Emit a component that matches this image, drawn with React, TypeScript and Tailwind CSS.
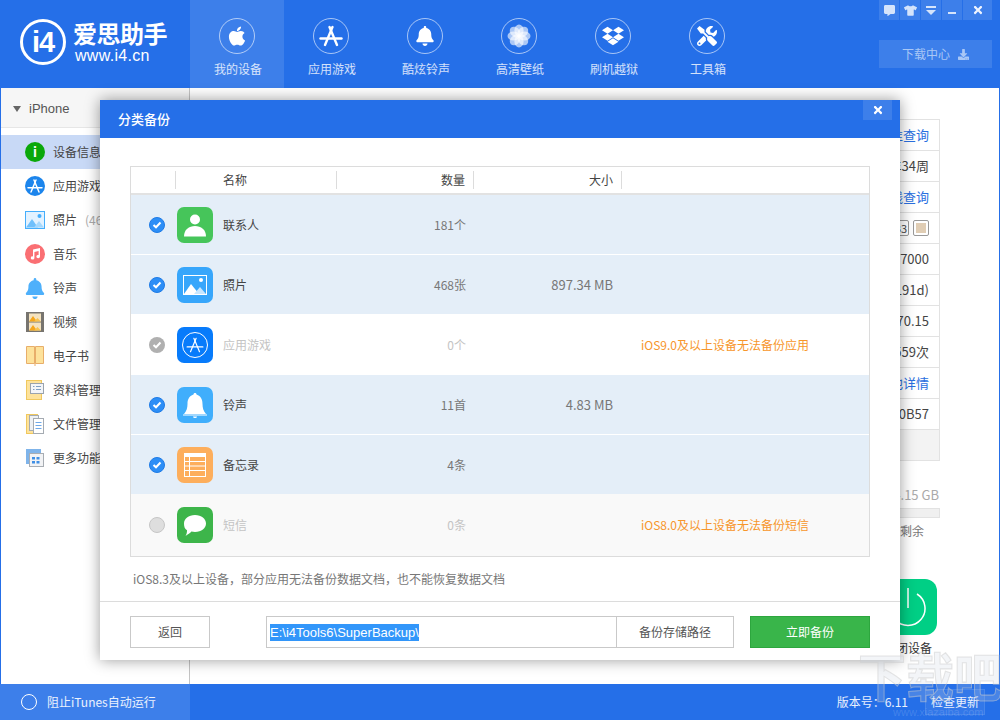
import type { ReactNode } from "react"
import { FaApple, FaBell, FaCommentAlt, FaDropbox, FaTshirt, FaTools, FaTimes, FaDownload } from "react-icons/fa"

function AppA({ size = 22, color = "#fff", sw = 2 }: { size?: number; color?: string; sw?: number }) {
  return (
    <svg width={size} height={size} viewBox="0 0 24 24" fill="none" stroke={color} strokeWidth={sw} strokeLinecap="round">
      <path d="M13.500 3 6 21" />
      <path d="M10.500 3 18 21" />
      <path d="M1.500 14.500h21" />
    </svg>
  )
}

function Flower() {
  const petals = [0, 45, 90, 135, 180, 225, 270, 315]
  return (
    <svg width="24" height="24" viewBox="0 0 24 24">
      {petals.map((a) => (
        <ellipse key={a} cx="12" cy="6.500" rx="4.600" ry="6" fill="#fff" fillOpacity="0.62" transform={`rotate(${a} 12 12)`} />
      ))}
      <circle cx="12" cy="12" r="1.600" fill="#fff" />
    </svg>
  )
}

const navItems: { label: string; icon: ReactNode; active?: boolean }[] = [
  { label: "我的设备", icon: <FaApple size={22} color="#fff" />, active: true },
  { label: "应用游戏", icon: <AppA size={24} sw={2.4} /> },
  { label: "酷炫铃声", icon: <FaBell size={20} color="#fff" /> },
  { label: "高清壁纸", icon: <Flower /> },
  { label: "刷机越狱", icon: <FaDropbox size={22} color="#fff" /> },
  { label: "工具箱", icon: <FaTools size={20} color="#fff" /> },
]

function PhotoIcon() {
  return (
    <svg width="20" height="18" viewBox="0 0 20 18">
      <rect x="0.500" y="0.500" width="19" height="17" fill="#e3f2ff" stroke="#45aefc" />
      <circle cx="14.500" cy="5" r="2" fill="#45aefc" />
      <path d="M1 16.500 7 8l6 8.500z" fill="#6fc0fc" />
      <path d="M9 16.500 14 10l5 6.500z" fill="#a5d8fd" />
    </svg>
  )
}

function sideIcon(name: string) {
  switch (name) {
    case "info":
      return (
        <span className="w-5 h-5 rounded-full bg-[#0aa80a] text-white flex items-center justify-center text-[13px] font-bold">i</span>
      )
    case "app":
      return (
        <span className="w-5 h-5 rounded-full bg-[#1c85ec] flex items-center justify-center">
          <AppA size={16} sw={2.200} />
        </span>
      )
    case "photo":
      return <PhotoIcon />
    case "music":
      return (
        <span className="w-5 h-5 rounded-full bg-[#fa6f73] flex items-center justify-center">
          <svg width="12" height="12" viewBox="0 0 12 12" fill="#fff">
            <path d="M4 1.500 11 0v8.500a1.800 1.600 0 1 1-1.400-1.500V3L5.400 3.900v6a1.800 1.600 0 1 1-1.400-1.500z" />
          </svg>
        </span>
      )
    case "bell":
      return <FaBell size={21} color="#4eb0fb" />
    case "video":
      return (
        <svg width="18" height="20" viewBox="0 0 18 20">
          <rect width="18" height="20" fill="#77746f" />
          <rect x="3" y="1.500" width="12" height="8" fill="#f4e3c0" />
          <rect x="3" y="10.500" width="12" height="8" fill="#f4e3c0" />
          <path d="M3 9.500 7 4l4 5.500zM3 18.500 7 13l4 5.500z" fill="#f5a71d" />
          <path d="M8 9.500 11.500 6 15 9.500zM8 18.500l3.500-3.500 3.500 3.500z" fill="#f8c34f" />
        </svg>
      )
    case "book":
      return (
        <svg width="18" height="20" viewBox="0 0 18 20">
          <path d="M.5.500h8v17h-8zM9.500.500h8v17h-8z" fill="#fde29b" stroke="#e8ae6a" />
          <path d="M8.500 16h1v4h-1z" fill="#e8ae6a" />
        </svg>
      )
    case "data":
      return (
        <svg width="18" height="20" viewBox="0 0 18 20">
          <rect x=".5" y=".5" width="15" height="19" fill="#fde29b" stroke="#f0c85e" />
          <rect x="4.500" y="3.500" width="13" height="10" fill="#f3f5f8" stroke="#9aa3ad" />
          <path d="M7 6.500h1.500M7 9.500h1.500M10 6.500h5M10 9.500h5" stroke="#7f9fc4" />
        </svg>
      )
    case "file":
      return (
        <svg width="18" height="20" viewBox="0 0 18 20">
          <rect x=".5" y=".5" width="11" height="19" fill="#fde29b" stroke="#f0c85e" />
          <rect x="3.500" y="1.500" width="9" height="15" fill="#eef1f4" stroke="#a5abb2" />
          <rect x="7.500" y="4.500" width="10" height="15" fill="#fff" stroke="#a5abb2" />
          <path d="M9.500 8.500h6M9.500 11.500h6M9.500 14.500h6" stroke="#6ea8e8" />
        </svg>
      )
    default:
      return (
        <svg width="18" height="18" viewBox="0 0 18 18">
          <rect width="15" height="15" fill="#7fb4ea" />
          <rect x="3.500" y="4.500" width="14" height="13" fill="#f2f3f5" stroke="#a8adb3" />
          <path d="M6 8h3v2.500H6zM10.500 8h3v2.500h-3zM6 12h3v2.500H6zM10.500 12h3v2.500h-3z" fill="#3f8fe5" />
        </svg>
      )
  }
}

const sideItems = [
  { label: "设备信息", icon: "info" },
  { label: "应用游戏", icon: "app" },
  { label: "照片", icon: "photo", extra: "(468)" },
  { label: "音乐", icon: "music" },
  { label: "铃声", icon: "bell" },
  { label: "视频", icon: "video" },
  { label: "电子书", icon: "book" },
  { label: "资料管理", icon: "data" },
  { label: "文件管理", icon: "file" },
  { label: "更多功能", icon: "more" },
]

const infoRows: { text: string; link?: boolean; swatch?: boolean }[] = [
  { text: "精准查询", link: true },
  { text: "2016年34周" },
  { text: "在线查询", link: true },
  { text: "", swatch: true },
  { text: "A1586/7000" },
  { text: "2016-08(191d)" },
  { text: "10.3.70.15" },
  { text: "已充电559次" },
  { text: "查看电池详情", link: true },
  { text: "F2LS20B57" },
]

function Contact() {
  return (
    <svg width="36" height="36" viewBox="0 0 36 36">
      <rect width="36" height="36" rx="7" fill="#46c55a" />
      <circle cx="18" cy="12.500" r="5" fill="#fff" />
      <path d="M7 29.500c0-7 5-10.500 11-10.500s11 3.500 11 10.500z" fill="#fff" />
    </svg>
  )
}

function Photos() {
  return (
    <svg width="36" height="36" viewBox="0 0 36 36">
      <rect width="36" height="36" rx="7" fill="#37a6fb" />
      <rect x="6.500" y="8.500" width="23" height="19" fill="none" stroke="#fff" />
      <circle cx="24" cy="13" r="2" fill="#fff" />
      <path d="M7 27 14 17l8 10z" fill="#fff" />
      <path d="M17 27l6-7 6 7z" fill="#c7e6fe" />
    </svg>
  )
}

function AppStore() {
  return (
    <span className="w-9 h-9 rounded-[7px] bg-[#077bfb] flex items-center justify-center">
      <span className="w-[26px] h-[26px] rounded-full border border-white flex items-center justify-center">
        <AppA size={18} sw={1.600} />
      </span>
    </span>
  )
}

function BellTile() {
  return (
    <svg width="36" height="36" viewBox="0 0 36 36">
      <rect width="36" height="36" rx="7" fill="#40aefc" />
      <path d="M18 6c1 0 1.500.700 1.500 1.500C24 9 25.500 12.500 25.500 17c0 4 1 7 3.500 10H7c2.500-3 3.500-6 3.500-10 0-4.500 1.500-8 6-9.500C16.500 6.700 17 6 18 6z" fill="#fff" />
      <path d="M6 27.500h24v1H6zM16 29.500h4a2 1.500 0 0 1-4 0z" fill="#fff" />
    </svg>
  )
}

function Notes() {
  return (
    <svg width="36" height="36" viewBox="0 0 36 36">
      <rect width="36" height="36" rx="7" fill="#fdae5c" />
      <rect x="7" y="6" width="22" height="24" fill="#fff" />
      <rect x="8" y="10" width="20" height="19" fill="#fdae5c" />
      <path d="M8 14.500h20M8 19h20M8 23.500h20M12.500 10v19" stroke="#fff" />
    </svg>
  )
}

function Sms() {
  return (
    <svg width="36" height="36" viewBox="0 0 36 36">
      <rect width="36" height="36" rx="7" fill="#3db54a" />
      <path d="M18 8c6.500 0 11 3.700 11 8.500S24.500 25 18 25c-1.300 0-2.500-.1-3.600-.4C13 26.300 11 27.500 8.500 29c1-1.500 1.500-3.300 1.500-5.700-2.400-1.500-3-4-3-6.800C7 11.700 11.500 8 18 8z" fill="#fff" />
    </svg>
  )
}

type Row = {
  name: string
  count: string
  size?: string
  note?: string
  icon: ReactNode
  state: "on" | "grey" | "off"
  rowClass: string
}

const rows: Row[] = [
  { name: "联系人", count: "181个", icon: <Contact />, state: "on", rowClass: "h-[60px] bg-[#e4eef8] border-b border-white" },
  { name: "照片", count: "468张", size: "897.34 MB", icon: <Photos />, state: "on", rowClass: "h-[60px] bg-[#e4eef8] border-b border-white" },
  { name: "应用游戏", count: "0个", note: "iOS9.0及以上设备无法备份应用", icon: <AppStore />, state: "grey", rowClass: "h-[60px] bg-white" },
  { name: "铃声", count: "11首", size: "4.83 MB", icon: <BellTile />, state: "on", rowClass: "h-[60px] bg-[#e4eef8] border-b border-white" },
  { name: "备忘录", count: "4条", icon: <Notes />, state: "on", rowClass: "h-[59px] bg-[#e4eef8]" },
  { name: "短信", count: "0条", note: "iOS8.0及以上设备无法备份短信", icon: <Sms />, state: "off", rowClass: "h-[62px] bg-[#f9f9f9]" },
]

function Check({ state }: { state: Row["state"] }) {
  if (state === "off") {
    return <span className="w-4 h-4 rounded-full bg-[#dedede] border border-[#c6c6c6]" />
  }
  return (
    <span className={`w-4 h-4 rounded-full flex items-center justify-center ${state === "on" ? "bg-[#2d8ef6] border border-[#1f7be6]" : "bg-[#b0b0b0]"}`}>
      <svg width="10" height="8" viewBox="0 0 10 8" fill="none" stroke="#fff" strokeWidth="2">
        <path d="M1.500 4 4 6.300 8.500 1.500" />
      </svg>
    </span>
  )
}

export default function App() {
  return (
    <div className="relative w-[1000px] h-[720px] overflow-hidden flex flex-col bg-white text-[12px] text-[#444] font-['Noto_Sans_CJK_SC','Liberation_Sans',sans-serif]">
      <header className="h-[88px] bg-[#256fe8] flex shrink-0">
        <div className="w-[190px] flex items-center pl-[20px] pb-[4px]">
          <div className="w-[46px] h-[46px] rounded-full border-[3px] border-white flex items-center justify-center text-white text-[29px] font-bold leading-none tracking-[-1px] font-['Liberation_Sans',sans-serif]">
            i4
          </div>
          <div className="ml-[7px] text-white">
            <div className="text-[24px] leading-[26px] font-bold tracking-[-0.500px] whitespace-nowrap">爱思助手</div>
            <div className="text-[16px] leading-[17px] font-['Liberation_Sans',sans-serif] ml-[2px] mt-[1px] tracking-[0.3px]">www.i4.cn</div>
          </div>
        </div>
        {navItems.map((item) => (
          <div
            key={item.label}
            className={`w-[94px] flex flex-col items-center pt-[18px] ${item.active ? "bg-[#3d7fea]" : ""}`}
          >
            <div className="w-9 h-9 rounded-full border border-white/60 flex items-center justify-center">{item.icon}</div>
            <div className="mt-[6px] ml-[2px] text-white/80 leading-[18px]">{item.label}</div>
          </div>
        ))}
        <div className="flex-1 flex flex-col items-end pr-[8px]">
          <div className="flex gap-[1px] text-[#d5e4fb]">
            <span className="w-5 h-5 bg-[#3d7fea] flex items-center justify-center">
              <FaCommentAlt size={11} />
            </span>
            <span className="w-5 h-5 bg-[#3d7fea] flex items-center justify-center">
              <FaTshirt size={13} />
            </span>
            <span className="w-5 h-5 bg-[#3d7fea] flex flex-col items-center justify-center gap-[2px]">
              <span className="w-[10px] h-[2px] bg-[#d5e4fb]" />
              <span className="w-0 h-0 border-x-[5px] border-x-transparent border-t-[5px] border-t-[#d5e4fb]" />
            </span>
            <span className="w-5 h-5 bg-[#3d7fea] flex items-center justify-center pt-[5px]">
              <span className="w-2 h-[2px] bg-[#d5e4fb]" />
            </span>
            <span className="w-[29px] h-5 bg-[#3d7fea] flex items-center justify-center text-[#eef4fe]">
              <FaTimes size={12} />
            </span>
          </div>
          <div className="mt-5 w-[113px] h-[28px] bg-[#3d7fea] text-[#a9c7f6] flex items-center justify-center gap-[8px]">
            下载中心
            <FaDownload size={11} />
          </div>
        </div>
      </header>

      <div className="flex-1 flex border-x border-[#256fe8] min-h-0">
        <aside className="w-[189px] border-r border-[#c4c4c4] shrink-0">
          <div className="h-[40px] bg-[#f6f6f6] border-b border-[#e6e6e6] flex items-center pl-[12px] pt-[2px] text-[#555]">
            <span className="w-0 h-0 border-x-[4px] border-x-transparent border-t-[6px] border-t-[#666]" />
            <span className="ml-[8px] font-['Liberation_Sans',sans-serif] text-[13px]">iPhone</span>
          </div>
          <div className="pt-[7px]">
            {sideItems.map((item, i) => (
              <div key={item.label} className={`h-[34px] flex items-center ${i === 0 ? "bg-[#c8d9f6]" : ""}`}>
                <span className="w-5 h-5 ml-[24px] flex items-center justify-center">{sideIcon(item.icon)}</span>
                <span className="ml-[8px] text-[#444]">{item.label}</span>
                {item.extra && <span className="ml-[8px] text-[#aaa]">{item.extra}</span>}
              </div>
            ))}
          </div>
        </aside>

        <main className="flex-1 flex flex-col items-end pr-[59px] pt-[31px]">
          <div className="w-[300px] border-x border-t border-[#e2e2e2] text-right">
            {infoRows.map((r, i) => (
              <div key={i} className="h-[31px] border-b border-[#e2e2e2] pr-[10px] flex items-center justify-end">
                {r.swatch ? (
                  <span className="flex gap-[4px]">
                    <span className="w-[30px] h-[16px] border border-[#999] rounded-[2px] bg-white flex items-center justify-end pr-[1px] text-[11px] leading-none">8GB3</span>
                    <span className="w-[16px] h-[16px] border border-[#999] rounded-[2px] p-[2px]">
                      <span className="block w-full h-full bg-[#e0cdb4]" />
                    </span>
                  </span>
                ) : (
                  <span className={r.link ? "text-[#2a6fe0] text-[13px]" : "text-[#444] text-[13px]"}>{r.text}</span>
                )}
              </div>
            ))}
            <div className="h-[31px] bg-[#f3f3f3] border-b border-[#e2e2e2]" />
          </div>
          <div className="w-[300px] text-right mt-[25px] pr-[1px] text-[#aaa] leading-[18px] text-[13px]">128.00 GB / 64.15 GB</div>
          <div className="w-[300px] h-[10px] bg-[#f0f0f0] border border-[#e2e2e2] mt-[4px]" />
          <div className="w-[300px] text-right mt-[4px] text-[#777] pr-[16px] leading-[18px]">16.15 GB 剩余</div>
          <div className="w-[58px] h-[56px] mt-[39px] mr-[3px] rounded-[12px] bg-[#00cf85] flex items-center justify-center">
            <svg width="36" height="42" viewBox="0 0 36 42" fill="none" stroke="#fff" strokeWidth="1.500">
              <path d="M18 2v20" />
              <path d="M27 8a17 17 0 1 1-18 0" />
            </svg>
          </div>
          <div className="w-[300px] text-right mt-[4px] pr-[8px] text-[#333] leading-[18px]">关闭设备</div>
        </main>
      </div>

      <footer className="h-[36px] bg-[#256fe8] flex items-center text-white/90 shrink-0">
        <div className="w-[190px] h-full bg-[#3d7fea] flex items-center pl-[21px]">
          <span className="w-4 h-4 rounded-full border-[1.500px] border-white" />
          <span className="ml-[10px]">阻止iTunes自动运行</span>
        </div>
        <div className="ml-auto flex items-center pr-[15px]">
          <span>版本号：6.11</span>
          <span className="ml-[17px] w-[60px] h-[26px] bg-[#3d7fea]/60 border border-white/10 flex items-center justify-center">检查更新</span>
        </div>
      </footer>

      {/* dialog */}
      <div className="absolute left-[100px] top-[100px] w-[800px] h-[560px] bg-white flex flex-col shadow-[0_0_14px_rgba(0,0,0,0.4)]">
        <div className="h-[38px] bg-[#256fe8] flex items-start justify-between shrink-0">
          <span className="ml-[18px] mt-[10px] text-white text-[13px] font-medium leading-[18px]">分类备份</span>
          <span className="mr-[8px] w-[29px] h-[20px] bg-[#3d7fea] flex items-center justify-center text-white">
            <FaTimes size={12} />
          </span>
        </div>

        <div className="mx-[30px] mt-[28px] border border-[#dcdcdc] h-[391px] shrink-0">
          <div className="h-[28px] flex items-center border-b-2 border-[#e2e2e2] text-[#444]">
            <div className="w-[45px] h-[18px] border-r border-[#dcdcdc]" />
            <div className="w-[161px] h-[18px] border-r border-[#dcdcdc] pl-[47px] leading-[18px]">名称</div>
            <div className="w-[137px] h-[18px] border-r border-[#dcdcdc] pr-[8px] text-right leading-[18px]">数量</div>
            <div className="w-[148px] h-[18px] border-r border-[#dcdcdc] pr-[8px] text-right leading-[18px]">大小</div>
          </div>
          {rows.map((r) => {
            const dim = r.state !== "on"
            return (
              <div key={r.name} className={`flex items-center pl-[18px] ${r.rowClass}`}>
                <Check state={r.state} />
                <span className="ml-[12px] flex">{r.icon}</span>
                <span className={`ml-[10px] w-[120px] ${dim ? "text-[#c4c4c4]" : "text-[#444]"}`}>{r.name}</span>
                <span className={`w-[123px] text-right ${dim ? "text-[#c4c4c4]" : "text-[#777]"}`}>{r.count}</span>
                <span className="w-[147px] text-right text-[#777] text-[13px]">{r.size}</span>
                {r.note && <span className="ml-[28px] text-[#f7962b]">{r.note}</span>}
              </div>
            )
          })}
        </div>

        <div className="mx-[33px] mt-[12px] h-[20px] leading-[20px] text-[#777]">iOS8.3及以上设备，部分应用无法备份数据文档，也不能恢复数据文档</div>

        <div className="mt-[12px] border-t border-[#dcdcdc] flex items-start pt-[14px] px-[30px]">
          <button className="w-[80px] h-[32px] border border-[#c9c9c9] text-[#555]">返回</button>
          <div className="ml-[56px] w-[468px] h-[32px] border border-[#c9c9c9] flex">
            <div className="flex-1 flex items-center pl-[3px]">
              <span className="bg-[#3296fa] text-white leading-[17px] font-['Liberation_Sans',sans-serif] text-[13px]">E:\i4Tools6\SuperBackup\</span>
            </div>
            <div className="w-[117px] border-l border-[#c9c9c9] flex items-center justify-center text-[#555]">备份存储路径</div>
          </div>
          <button className="ml-[16px] w-[120px] h-[32px] bg-[#39b54a] border border-[#2da63e] text-white">立即备份</button>
        </div>
      </div>

      {/* watermark */}
      <div className="absolute left-[858px] top-[639px] pointer-events-none text-[48px] leading-[70px] font-bold scale-y-110 text-[rgba(200,210,225,0.22)] [-webkit-text-stroke:1px_rgba(205,205,205,0.5)] whitespace-nowrap">
        下载吧
      </div>
      <div className="absolute left-[893px] top-[706px] pointer-events-none text-[11px] leading-[12px] text-white/15 font-['Liberation_Sans',sans-serif] whitespace-nowrap">
        www.xiazaiba.com
      </div>
    </div>
  )
}
